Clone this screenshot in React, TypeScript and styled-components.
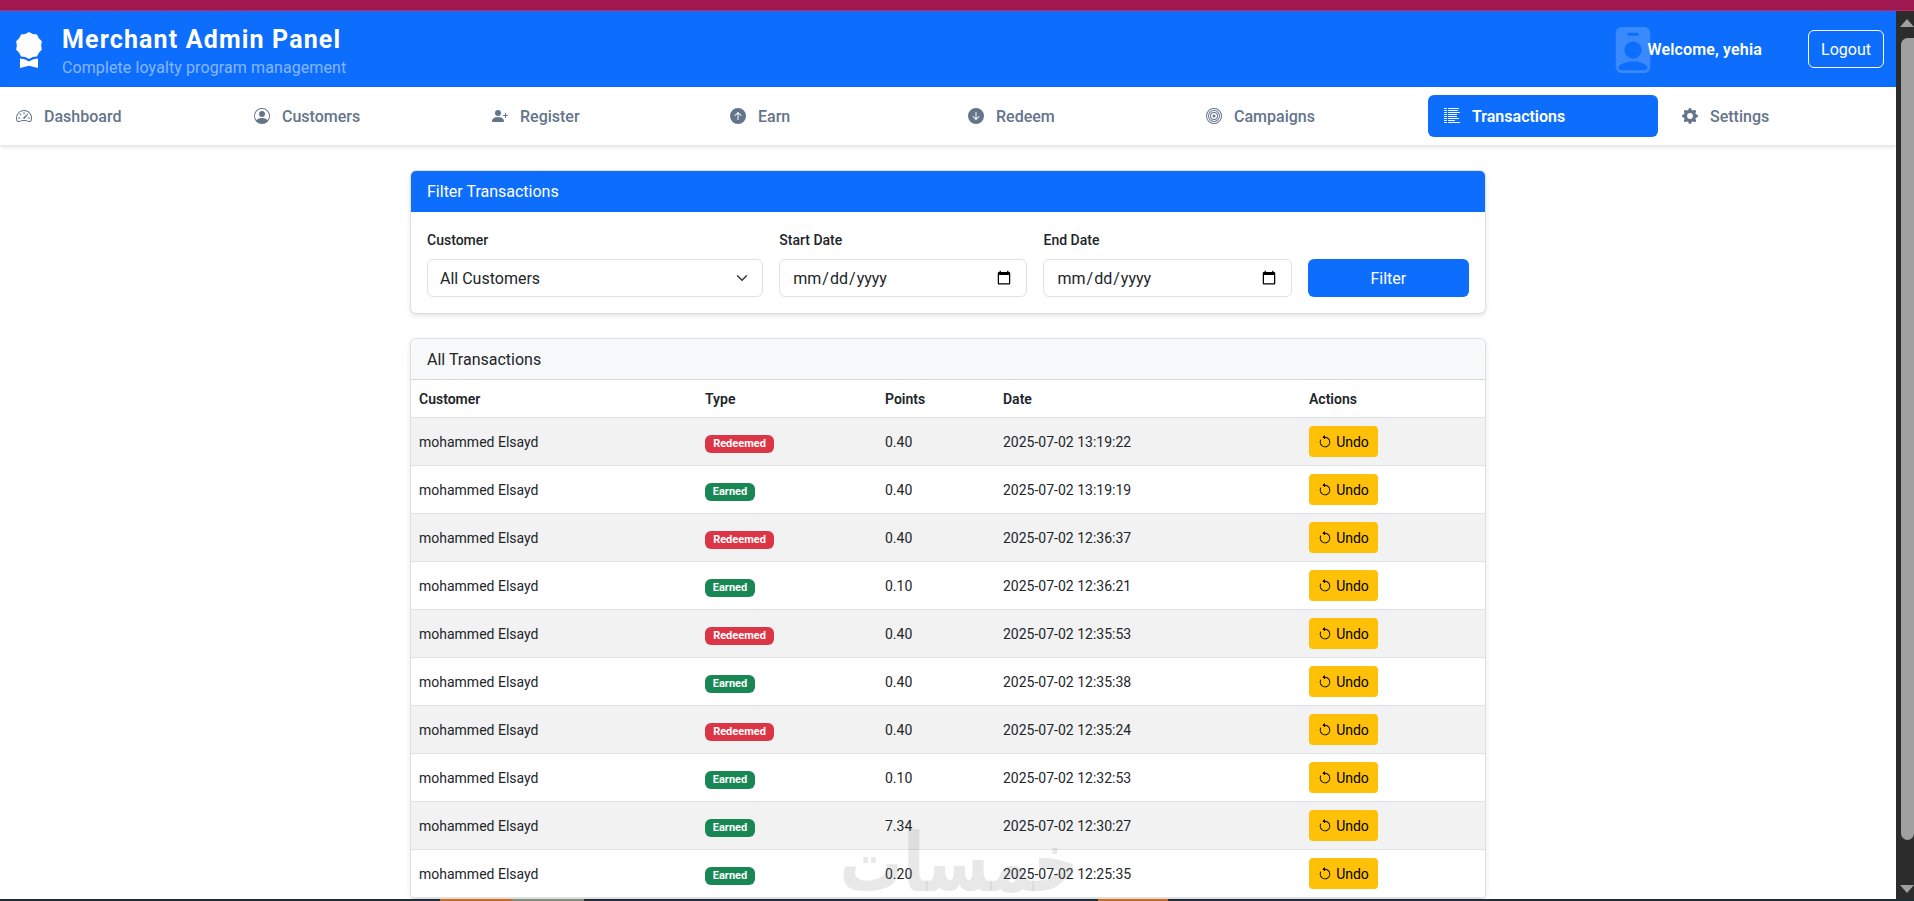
import React from "react";
import styled, { createGlobalStyle } from "styled-components";
import {
  BsAwardFill,
  BsPersonBadgeFill,
  BsSpeedometer2,
  BsPersonCircle,
  BsPersonPlusFill,
  BsArrowUpCircleFill,
  BsArrowDownCircleFill,
  BsBullseye,
  BsListColumnsReverse,
  BsGearFill,
  BsArrowCounterclockwise,
} from "react-icons/bs";

const Global = createGlobalStyle`
  * { box-sizing: border-box; }
  html, body { margin: 0; padding: 0; height: 100%; overflow: hidden; background: #fff; }
  body { font-family: Roboto, "Noto Sans", "Liberation Sans", sans-serif; color: #212529; }
`;

const Page = styled.div`
  position: relative;
  width: 1914px;
  height: 901px;
  display: flex;
  flex-direction: column;
  overflow: hidden;
`;
const TopStrip = styled.div`
  height: 11px;
  flex: none;
  background: #a01850;
  border-bottom: 1px solid #c42464;
`;
const Body = styled.div`
  flex: 1;
  min-height: 0;
  display: flex;
`;
const Main = styled.div`
  flex: 1;
  min-width: 0;
  overflow: hidden;
`;
const BottomStrip = styled.div`
  height: 2px;
  flex: none;
  background: linear-gradient(
    to right,
    #1f2d3a 0 440px,
    #c86a22 440px 511px,
    #7f8f78 513px 584px,
    #1f2d3a 584px 1098px,
    #c86a22 1098px 1168px,
    #1f2d3a 1168px
  );
`;
const ScrollTrack = styled.div`
  width: 18px;
  flex: none;
  background: #2c2c2c;
  display: flex;
  flex-direction: column;
  align-items: flex-end;
`;
const ArrowUp = styled.div`
  margin-top: 8px;
  width: 0;
  height: 0;
  border-left: 7px solid transparent;
  border-right: 7px solid transparent;
  border-bottom: 8px solid #a0a0a0;
`;
const Thumb = styled.div`
  margin-top: 11px;
  width: 13px;
  height: 802px;
  background: #a0a0a0;
  border-radius: 7px 0 7px 7px;
`;
const ArrowDown = styled.div`
  margin-top: 45px;
  width: 0;
  height: 0;
  border-left: 7px solid transparent;
  border-right: 7px solid transparent;
  border-top: 8px solid #a0a0a0;
`;

const Header = styled.header`
  height: 76px;
  background: #0d6efd;
  color: #fff;
  display: flex;
  align-items: center;
  padding: 0 12px 0 11px;
`;
const LogoIcon = styled(BsAwardFill)`
  width: 36px;
  height: 36px;
  flex: none;
  margin-top: 2px;
`;
const Brand = styled.div`
  margin-left: 15px;
  flex: 1;
`;
const Title = styled.h1`
  margin: 5px 0 0;
  font-size: 25px;
  line-height: 32px;
  font-weight: 700;
  letter-spacing: 1.15px;
`;
const Subtitle = styled.p`
  margin: 0;
  font-size: 16px;
  line-height: 24px;
  color: rgba(255, 255, 255, 0.5);
  letter-spacing: 0.1px;
`;
const AvatarIcon = styled(BsPersonBadgeFill)`
  width: 46px;
  height: 46px;
  flex: none;
  margin: 2px -8px 0 0;
  color: rgba(255, 255, 255, 0.19);
`;
const Welcome = styled.span`
  font-size: 16px;
  font-weight: 600;
  letter-spacing: 0.15px;
  margin-right: 46px;
`;
const Logout = styled.button`
  width: 76px;
  height: 38px;
  background: transparent;
  border: 1px solid #fff;
  border-radius: 6px;
  color: #fff;
  font: inherit;
  font-size: 16px;
  padding: 0;
`;

const Nav = styled.nav`
  height: 58px;
  padding: 8px 0;
  display: flex;
  gap: 8px;
  background: #fff;
  box-shadow: 0 2px 4px rgba(0, 0, 0, 0.12);
  position: relative;
`;
const NavItem = styled.a<{ $active?: boolean }>`
  flex: 1;
  display: flex;
  align-items: center;
  gap: 12px;
  padding: 0 16px;
  border-radius: 6px;
  font-size: 16px;
  font-weight: ${(p) => (p.$active ? 600 : 500)};
  color: ${(p) => (p.$active ? "#fff" : "#64748b")};
  background: ${(p) => (p.$active ? "#0d6efd" : "transparent")};
  svg {
    width: 16px;
    height: 16px;
    flex: none;
  }
`;

const Content = styled.div`
  width: 1076px;
  margin: 25px auto 0;
  display: flex;
  flex-direction: column;
  gap: 24px;
`;
const Card = styled.section`
  background: #fff;
  border: 1px solid rgba(0, 0, 0, 0.125);
  border-radius: 6px;
  box-shadow: 0 2px 4px rgba(0, 0, 0, 0.1);
  overflow: hidden;
`;
const CardHeader = styled.div<{ $primary?: boolean }>`
  height: 41px;
  display: flex;
  align-items: center;
  padding: 0 16px;
  font-size: 16px;
  background: ${(p) => (p.$primary ? "#0d6efd" : "#f8f9fa")};
  color: ${(p) => (p.$primary ? "#fff" : "#212529")};
  border-bottom: 1px solid ${(p) => (p.$primary ? "#0d6efd" : "#d5d7d9")};
`;
const FilterForm = styled.form`
  display: grid;
  grid-template-columns: 336.3px 248.2px 248.2px 161.3px;
  gap: 16px;
  padding: 18px 16px 16px;
  align-items: end;
`;
const Field = styled.label`
  display: flex;
  flex-direction: column;
  gap: 8px;
  font-size: 14px;
  font-weight: 500;
  line-height: 21px;
`;
const inputStyles = `
  height: 38px;
  width: 100%;
  border: 1px solid #dee2e6;
  border-radius: 6px;
  background-color: #fff;
  color: #212529;
  font-family: inherit;
  font-size: 16px;
  font-weight: 400;
  padding: 0 12px;
`;
const Select = styled.select`
  ${inputStyles}
  appearance: none;
  background-image: url("data:image/svg+xml,%3csvg xmlns='http://www.w3.org/2000/svg' viewBox='0 0 16 16'%3e%3cpath fill='none' stroke='%23343a40' stroke-linecap='round' stroke-linejoin='round' stroke-width='2' d='m2 5 6 6 6-6'/%3e%3c/svg%3e");
  background-repeat: no-repeat;
  background-position: right 12px center;
  background-size: 16px 12px;
`;
const DateInput = styled.input`
  ${inputStyles}
`;
const FilterButton = styled.button`
  height: 38px;
  background: #0d6efd;
  color: #fff;
  border: 0;
  border-radius: 6px;
  font: inherit;
  font-size: 16px;
`;

const Table = styled.table`
  width: 1074px;
  table-layout: fixed;
  border-collapse: collapse;
  font-size: 14px;
`;
const Th = styled.th<{ $w: number }>`
  width: ${(p) => p.$w}px;
  height: 37px;
  padding: 2px 8px 0;
  text-align: left;
  font-weight: 600;
  border-bottom: 1px solid #dee2e6;
`;
const Row = styled.tr<{ $striped: boolean }>`
  height: 48px;
  background: ${(p) => (p.$striped ? "#f2f2f2" : "#fff")};
  border-bottom: 1px solid #dee2e6;
`;
const Td = styled.td`
  padding: 0 8px;
`;
const TextTd = styled(Td)`
  padding-top: 2px;
`;
const Badge = styled.span<{ $kind: string }>`
  display: inline-flex;
  align-items: center;
  justify-content: center;
  height: 18px;
  margin-top: 5px;
  width: ${(p) => (p.$kind === "Redeemed" ? 69 : 50)}px;
  border-radius: 6px;
  color: #fff;
  font-size: 11px;
  font-weight: 700;
  background: ${(p) => (p.$kind === "Redeemed" ? "#dc3545" : "#198754")};
  vertical-align: middle;
`;
const UndoButton = styled.button`
  display: inline-flex;
  align-items: center;
  justify-content: center;
  gap: 4px;
  width: 69px;
  height: 31px;
  margin-top: 1px;
  border: 0;
  border-radius: 4px;
  background: #ffc107;
  color: #000;
  font: inherit;
  font-size: 14px;
  padding: 1px 0 0;
  vertical-align: middle;
  svg {
    width: 14px;
    height: 14px;
  }
`;
const Watermark = styled.div`
  position: absolute;
  left: 870px;
  top: 825px;
  width: 236px;
  text-align: center;
  font-family: "DejaVu Sans", sans-serif;
  font-weight: 700;
  font-size: 82px;
  line-height: 76px;
  white-space: nowrap;
  color: rgba(120, 120, 120, 0.17);
  transform: scaleX(0.77);
  pointer-events: none;
`;

const navItems = [
  { label: "Dashboard", Icon: BsSpeedometer2 },
  { label: "Customers", Icon: BsPersonCircle },
  { label: "Register", Icon: BsPersonPlusFill },
  { label: "Earn", Icon: BsArrowUpCircleFill },
  { label: "Redeem", Icon: BsArrowDownCircleFill },
  { label: "Campaigns", Icon: BsBullseye },
  { label: "Transactions", Icon: BsListColumnsReverse, active: true },
  { label: "Settings", Icon: BsGearFill },
];

const columns = [
  { label: "Customer", w: 286 },
  { label: "Type", w: 180 },
  { label: "Points", w: 118 },
  { label: "Date", w: 306 },
  { label: "Actions", w: 184 },
];

const rows = [
  ["Redeemed", "0.40", "2025-07-02 13:19:22"],
  ["Earned", "0.40", "2025-07-02 13:19:19"],
  ["Redeemed", "0.40", "2025-07-02 12:36:37"],
  ["Earned", "0.10", "2025-07-02 12:36:21"],
  ["Redeemed", "0.40", "2025-07-02 12:35:53"],
  ["Earned", "0.40", "2025-07-02 12:35:38"],
  ["Redeemed", "0.40", "2025-07-02 12:35:24"],
  ["Earned", "0.10", "2025-07-02 12:32:53"],
  ["Earned", "7.34", "2025-07-02 12:30:27"],
  ["Earned", "0.20", "2025-07-02 12:25:35"],
];

export default function App() {
  return (
    <Page>
      <Global />
      <TopStrip />
      <Body>
        <Main>
          <Header>
            <LogoIcon />
            <Brand>
              <Title>Merchant Admin Panel</Title>
              <Subtitle>Complete loyalty program management</Subtitle>
            </Brand>
            <AvatarIcon />
            <Welcome>Welcome, yehia</Welcome>
            <Logout type="button">Logout</Logout>
          </Header>
          <Nav>
            {navItems.map(({ label, Icon, active }) => (
              <NavItem key={label} $active={active}>
                <Icon />
                {label}
              </NavItem>
            ))}
          </Nav>
          <Content>
            <Card>
              <CardHeader $primary>Filter Transactions</CardHeader>
              <FilterForm>
                <Field>
                  Customer
                  <Select defaultValue="all">
                    <option value="all">All Customers</option>
                  </Select>
                </Field>
                <Field>
                  Start Date
                  <DateInput type="date" />
                </Field>
                <Field>
                  End Date
                  <DateInput type="date" />
                </Field>
                <FilterButton type="button">Filter</FilterButton>
              </FilterForm>
            </Card>
            <Card>
              <CardHeader>All Transactions</CardHeader>
              <Table>
                <thead>
                  <tr>
                    {columns.map((c) => (
                      <Th key={c.label} $w={c.w}>
                        {c.label}
                      </Th>
                    ))}
                  </tr>
                </thead>
                <tbody>
                  {rows.map(([kind, points, date], i) => (
                    <Row key={date} $striped={i % 2 === 0}>
                      <TextTd>mohammed Elsayd</TextTd>
                      <Td>
                        <Badge $kind={kind}>{kind}</Badge>
                      </Td>
                      <TextTd>{points}</TextTd>
                      <TextTd>{date}</TextTd>
                      <Td>
                        <UndoButton type="button">
                          <BsArrowCounterclockwise />
                          Undo
                        </UndoButton>
                      </Td>
                    </Row>
                  ))}
                </tbody>
              </Table>
            </Card>
          </Content>
        </Main>
        <ScrollTrack>
          <ArrowUp />
          <Thumb />
          <ArrowDown />
        </ScrollTrack>
      </Body>
      <BottomStrip />
      <Watermark lang="ar" dir="rtl">
        خمسات
      </Watermark>
    </Page>
  );
}
